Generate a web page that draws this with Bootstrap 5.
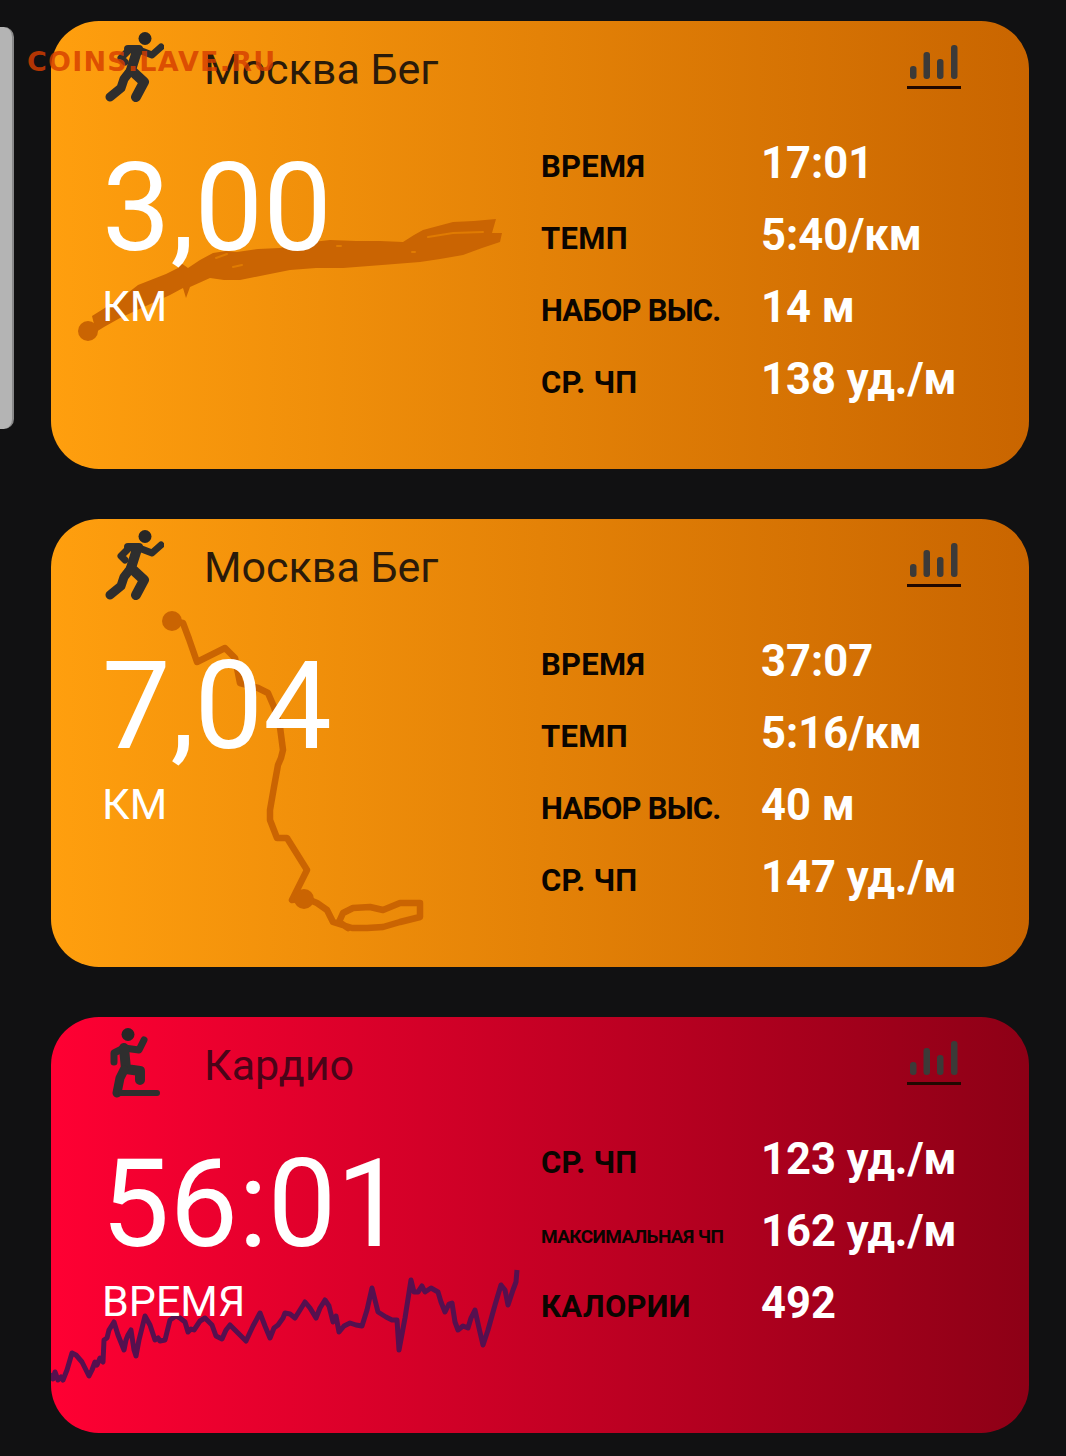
<!DOCTYPE html>
<html lang="ru">
<head>
  <meta charset="UTF-8" />
  <meta name="viewport" content="width=device-width, initial-scale=1.0"/>
  <title>Тренировки</title>

  <!-- Bootstrap CSS -->
  <link rel="stylesheet" href="https://cdn.jsdelivr.net/npm/bootstrap@5.3.0/dist/css/bootstrap.min.css" crossorigin="anonymous" />
  <style>
    body {
      background: #111112;
      font-family: Roboto, "Noto Sans", sans-serif;
      min-height: 1456px;
      padding: 21px 37px 0 51px;
    }
    .feed { gap: 50px; }
    .workout {
      border-radius: 48px;
      height: 448px;
      overflow: hidden;
      padding: 11px 68px 0 51px;
    }
    .workout.short { height: 416px; }
    .workout.run { background: linear-gradient(90deg, #ff9f0e 0%, #c96500 100%); }
    .workout.cardio { background: linear-gradient(90deg, #ff0033 0%, #8d0016 100%); }
    .track { position: absolute; inset: 0; width: 100%; height: 100%; }
    .head-row, .body-row { position: relative; z-index: 1; }
    .head-row { height: 70px; }
    .sport-icon { width: 62px; height: 70px; flex: none; }
    .sport-title { color: #2a1a0a; font-size: 43px; line-height: 1; margin: 16px 0 0 40px; }
    .cardio .sport-title { color: #4a0418; }
    .chart-btn { width: 56px; height: 46px; margin: 13px -2px 0 0; }
    .body-row { margin-top: 30px; }
    .main-col { width: 439px; flex: none; }
    .big-value { color: #fff; font-size: 122px; line-height: 1; margin-top: 16px; }
    .big-unit { color: #fff; font-size: 43px; line-height: 1; margin-top: 15px; }
    .cardio .big-value { margin-left: -1px; }
    .cardio .big-unit { margin-top: 14px; }
    .stat-grid { display: grid; grid-template-columns: 220px auto; grid-auto-rows: 72px; }
    .stat-name { color: #0b0500; font-size: 31px; font-weight: 700; letter-spacing: .3px; line-height: 70px; white-space: nowrap; }
    .stat-name.snug { letter-spacing: -.8px; }
    .stat-name.tiny { font-size: 19px; letter-spacing: -.6px; line-height: 74px; }
    .stat-val { color: #fff; font-size: 43.500px; font-weight: 700; line-height: 64px; white-space: nowrap; }
    .edge-handle {
      position: absolute; left: 0; top: 27px; width: 14px; height: 402px;
      background: #b4b4b4; border-right: 2px solid #8a8a8a; border-radius: 0 10px 10px 0;
    }
    .site-mark {
      position: absolute; left: 27px; top: 45px; z-index: 5;
      color: rgba(214, 62, 0, .82);
      font-family: "DejaVu Sans", sans-serif; font-size: 27px; font-weight: 700; letter-spacing: 1.200px; line-height: 34px;
    }
  </style>
</head>
<body>

  <!-- Side panel handle and site stamp -->
  <div class="edge-handle"></div>
  <div class="site-mark">COINS.LAVE.RU</div>

  <!-- Reused icons -->
  <svg width="0" height="0" class="position-absolute">
    <symbol id="ico-run" viewBox="-4 0 62 70">
      <g fill="none" stroke="#2e2e2e" stroke-width="7" stroke-linecap="round" stroke-linejoin="round">
        <path d="M33 18l13 5 9-8M23 18l-8 8 4 4"/>
        <path d="M31 19l-6 19 13 12-8 15" stroke-width="10"/>
        <path d="M25 38l-7 9-3 9-11 9" stroke-width="9"/>
        <path d="M22 17h11" stroke-width="8"/>
      </g>
      <circle cx="39" cy="6.500" r="6.500" fill="#262626"/>
    </symbol>
    <symbol id="ico-step" viewBox="-2 0 62 70">
      <g fill="none" stroke="#2e2e2e" stroke-width="7" stroke-linecap="round" stroke-linejoin="round">
        <path d="M20 20l15 2 5-10M20 20l-10 5v9"/>
        <path d="M20 20l2 21 14 2v9" stroke-width="10"/>
        <path d="M20 42l-4 8-3 15" stroke-width="9"/>
        <path d="M17 65h36" stroke-width="6"/>
      </g>
      <circle cx="24" cy="6.500" r="6.500" fill="#262626"/>
    </symbol>
    <symbol id="ico-bars" viewBox="0 0 56 46">
      <g fill="#3c3a38">
        <rect x="3" y="21" width="6.500" height="13" rx="3"/>
        <rect x="16.500" y="7" width="6.500" height="27" rx="3"/>
        <rect x="30" y="14" width="6.500" height="20" rx="3"/>
        <rect x="44" y="0" width="6.500" height="34" rx="3"/>
      </g>
      <rect y="41" width="54" height="3" fill="#210800"/>
    </symbol>
  </svg>

  <div class="feed d-flex flex-column">

    <!-- Run, 3 km: laps overlap into one wide band -->
    <div class="workout run position-relative">
      <svg class="track" viewBox="51 21 978 448">
        <path fill="#ca6402" d="M92 316L108 306 124 296 138 285 166 274 178 268 181 263 188 268 200 260 213 253 226 251 237 252 258 249 280 248 304 243 330 240 356 241 380 241 403 242 414 235 423 230 438 226 453 222 474 221 496 219 492 233 502 233 500 242 482 248 463 255 440 259 420 262 382 265 343 268 316 268 290 270 265 275 240 280 224 280 210 278 190 287 186 298 183 288 170 295 146 306 120 318 104 327 96 332z"/>
        <g fill="none" stroke-linecap="round">
          <path stroke="#e07b02" stroke-width="2" d="M428 237l25-4 30-1M216 258l11-4M233 267l9-2M337 246h4M412 252h3"/>
        </g>
        <circle cx="88" cy="331" r="10" fill="#ca6402"/>
      </svg>
      <div class="head-row d-flex align-items-start">
        <svg class="sport-icon"><use href="#ico-run"/></svg>
        <div class="sport-title">Москва Бег</div>
        <svg class="chart-btn ms-auto"><use href="#ico-bars"/></svg>
      </div>
      <div class="body-row d-flex">
        <div class="main-col">
          <div class="big-value">3,00</div>
          <div class="big-unit">КМ</div>
        </div>
        <div class="stat-grid">
          <div class="stat-name">ВРЕМЯ</div><div class="stat-val">17:01</div>
          <div class="stat-name">ТЕМП</div><div class="stat-val">5:40/км</div>
          <div class="stat-name snug">НАБОР ВЫС.</div><div class="stat-val">14 м</div>
          <div class="stat-name">СР. ЧП</div><div class="stat-val">138 уд./м</div>
        </div>
      </div>
    </div>

    <!-- Run, 7 km -->
    <div class="workout run position-relative">
      <svg class="track" viewBox="51 519 978 448">
        <g fill="none" stroke="#ca6402" stroke-width="6.500" stroke-linecap="round" stroke-linejoin="round">
          <path d="M172 621l11 2 6 16 8 23 28-14 10 10 5 25 18 5 10 5 6 14 6 20 3 23-2 8-3 7-4 22-4 23v10l7 18h10l20 32-15 30 13-2 12 5 10 7 6 12 19 6 15 0 16-1 17-5 20-5v-14h-20l-17 7-13-3-17 1-10 5-4 9 9 6"/>
        </g>
        <circle cx="172" cy="621" r="10" fill="#ca6402"/>
        <circle cx="304" cy="899" r="10" fill="#ca6402"/>
      </svg>
      <div class="head-row d-flex align-items-start">
        <svg class="sport-icon"><use href="#ico-run"/></svg>
        <div class="sport-title">Москва Бег</div>
        <svg class="chart-btn ms-auto"><use href="#ico-bars"/></svg>
      </div>
      <div class="body-row d-flex">
        <div class="main-col">
          <div class="big-value">7,04</div>
          <div class="big-unit">КМ</div>
        </div>
        <div class="stat-grid">
          <div class="stat-name">ВРЕМЯ</div><div class="stat-val">37:07</div>
          <div class="stat-name">ТЕМП</div><div class="stat-val">5:16/км</div>
          <div class="stat-name snug">НАБОР ВЫС.</div><div class="stat-val">40 м</div>
          <div class="stat-name">СР. ЧП</div><div class="stat-val">147 уд./м</div>
        </div>
      </div>
    </div>

    <!-- Cardio, heart rate line -->
    <div class="workout cardio short position-relative">
      <svg class="track" viewBox="51 1017 978 416">
        <polyline fill="none" stroke="#55104f" stroke-width="5" stroke-linejoin="round" points="51,1373 53,1379 55,1372 58,1380 61,1377 63,1380 67,1370 72,1353 76,1355 82,1362 86,1370 89,1376 92,1370 95,1362 97,1365 100,1358 103,1362 104,1340 107,1338 109,1330 114,1322 118,1335 124,1350 126,1340 128,1335 131,1330 134,1350 136,1356 139,1340 145,1316 150,1325 155,1340 158,1338 160,1341 165,1340 170,1320 176,1316 180,1318 185,1322 188,1332 191,1329 194,1330 200,1321 205,1318 212,1325 216,1336 222,1339 226,1330 230,1325 235,1330 241,1336 246,1341 253,1326 260,1313 265,1326 270,1338 274,1328 278,1325 283,1318 285,1313 290,1314 295,1318 300,1310 305,1302 310,1308 316,1318 320,1308 325,1300 329,1306 333,1322 336,1316 339,1332 344,1326 350,1323 356,1325 362,1326 367,1310 372,1288 375,1300 378,1312 386,1317 392,1320 397,1320 399,1350 405,1318 411,1280 414,1292 418,1292 422,1286 425,1292 431,1288 438,1292 441,1302 445,1312 449,1304 452,1303 455,1322 458,1330 463,1326 468,1328 471,1318 475,1310 479,1328 483,1345 488,1330 495,1305 501,1285 505,1290 508,1305 513,1290 516,1282 517,1270"/>
      </svg>
      <div class="head-row d-flex align-items-start">
        <svg class="sport-icon"><use href="#ico-step"/></svg>
        <div class="sport-title">Кардио</div>
        <svg class="chart-btn ms-auto"><use href="#ico-bars"/></svg>
      </div>
      <div class="body-row d-flex">
        <div class="main-col">
          <div class="big-value">56:01</div>
          <div class="big-unit">ВРЕМЯ</div>
        </div>
        <div class="stat-grid">
          <div class="stat-name">СР. ЧП</div><div class="stat-val">123 уд./м</div>
          <div class="stat-name tiny">МАКСИМАЛЬНАЯ ЧП</div><div class="stat-val">162 уд./м</div>
          <div class="stat-name">КАЛОРИИ</div><div class="stat-val">492</div>
        </div>
      </div>
    </div>

  </div>

  <!-- Bootstrap JS Bundle -->
  <script src="https://cdn.jsdelivr.net/npm/bootstrap@5.3.0/dist/js/bootstrap.bundle.min.js" crossorigin="anonymous"></script>
</body>
</html>
